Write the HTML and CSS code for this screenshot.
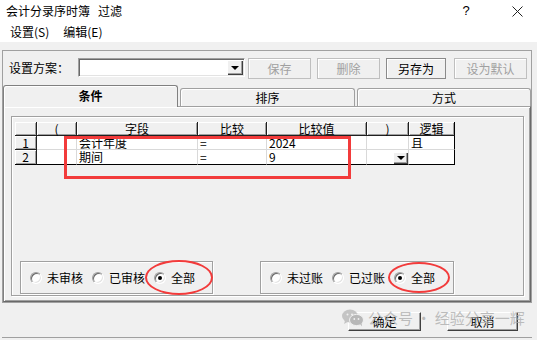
FILE: index.html
```html
<!DOCTYPE html>
<html lang="zh-CN">
<head>
    <meta charset="UTF-8">
    <meta name="viewport" content="width=device-width, initial-scale=1.0">
    <title>会计分录序时簿 过滤</title>
    <link rel="stylesheet" href="styles.css">
</head>
<body>
<div class="dialog">
    <div class="titlebar">
        <span class="title">会计分录序时簿<span class="sub">过滤</span></span>
        <span class="help">?</span>
        <svg class="close" width="11" height="11" viewBox="0 0 11 11">
            <path d="M0.5 0.5L10.5 10.5M10.5 0.5L0.5 10.5" stroke="#222" stroke-width="1" fill="none"/>
        </svg>
    </div>
    <div class="menubar">
        <span>设置(S)</span>
        <span>编辑(E)</span>
    </div>

    <div class="client">
        <div class="frame">
            <div class="scheme">
                <span class="scheme-label">设置方案：</span>
                <div class="combo"><span class="combo-btn"><i class="arrow"></i></span></div>
                <button class="btn btn-save" disabled>保存</button>
                <button class="btn btn-del" disabled>删除</button>
                <button class="btn btn-saveas">另存为</button>
                <button class="btn btn-default" disabled>设为默认</button>
            </div>

            <div class="tabs">
                <div class="tab active">条件</div>
                <div class="tab">排序</div>
                <div class="tab last">方式</div>
            </div>

            <div class="tab-panel">
                <div class="content">
                    <div class="grid">
                        <div class="cell fix"></div>
                        <div class="cell fix">(</div>
                        <div class="cell fix">字段</div>
                        <div class="cell fix">比较</div>
                        <div class="cell fix">比较值</div>
                        <div class="cell fix">)</div>
                        <div class="cell fix end">逻辑</div>

                        <div class="cell fix">1</div>
                        <div class="cell"></div>
                        <div class="cell">会计年度</div>
                        <div class="cell">=</div>
                        <div class="cell">2024</div>
                        <div class="cell"></div>
                        <div class="cell end">且</div>

                        <div class="cell fix foot">2</div>
                        <div class="cell foot"></div>
                        <div class="cell foot">期间</div>
                        <div class="cell foot">=</div>
                        <div class="cell foot">9</div>
                        <div class="cell foot drop-cell"><span class="drop"><i class="arrow"></i></span></div>
                        <div class="cell foot end"></div>
                    </div>

                    <div class="radios">
                        <div class="group group-audit">
                            <span class="radio"><span class="dot"></span>未审核</span>
                            <span class="radio"><span class="dot"></span>已审核</span>
                            <span class="radio"><span class="dot on"></span>全部</span>
                        </div>
                        <div class="group group-post">
                            <span class="radio"><span class="dot"></span>未过账</span>
                            <span class="radio"><span class="dot"></span>已过账</span>
                            <span class="radio"><span class="dot on"></span>全部</span>
                        </div>
                    </div>
                </div>
            </div>
        </div>

        <div class="footer">
            <button class="btn-main btn-ok">确定</button>
            <button class="btn-main btn-cancel">取消</button>
        </div>
    </div>

    <!-- red marks drawn over the screenshot -->
    <div class="mark mark-rows"></div>
    <div class="mark mark-oval mark-audit"></div>
    <div class="mark mark-oval mark-post"></div>

    <div class="watermark">
        <svg width="22" height="18" viewBox="0 0 22 18">
            <ellipse cx="8" cy="7" rx="8" ry="6.5" fill="#c4c4c4"/>
            <path d="M3 11.5L2 15L6 12.8Z" fill="#c4c4c4"/>
            <ellipse cx="14.5" cy="11" rx="7" ry="5.6" fill="#b8b8b8" stroke="#f0f0f0" stroke-width="1"/>
            <path d="M18 15L20 17.5L19.5 14Z" fill="#b8b8b8"/>
            <circle cx="5.5" cy="5.5" r="1" fill="#f0f0f0"/>
            <circle cx="10" cy="5.5" r="1" fill="#f0f0f0"/>
            <circle cx="12.3" cy="10" r="0.9" fill="#f0f0f0"/>
            <circle cx="16.5" cy="10" r="0.9" fill="#f0f0f0"/>
        </svg>
        <span>公众号 · 经验分享一辉</span>
    </div>
</div>
</body>
</html>
```

FILE: styles.css
```css
* {
    box-sizing: border-box;
}

body {
    margin: 0;
    background-color: #f0f0f0;
    font-family: "Noto Sans CJK SC", "Liberation Sans", sans-serif;
    font-size: 12px;
    color: #000;
}

.dialog {
    width: 537px;
    height: 340px;
    position: relative;
    overflow: hidden;
    background-color: #f0f0f0;
}

/* title + menu */
.titlebar {
    height: 22px;
    background-color: #fff;
    display: flex;
    align-items: center;
    padding-left: 6px;
    line-height: 14px;
}

.title {
    flex: 1;
}

.title .sub {
    margin-left: 8px;
}

.help {
    width: 10px;
    text-align: center;
    margin-right: 41px;
    font-family: "Liberation Sans", sans-serif;
    font-size: 13px;
}

.close {
    margin-right: 14px;
}

.menubar {
    height: 20px;
    background-color: #fff;
    display: flex;
    align-items: center;
    gap: 14px;
    padding-left: 10px;
    line-height: 14px;
}

.client {
    height: 298px;
    padding: 8px 5px 0 2px;
}

.frame {
    height: 253px;
    border: 1px solid #a0a0a0;
    display: flex;
    flex-direction: column;
}

/* scheme toolbar */
.scheme {
    height: 34px;
    display: flex;
    align-items: center;
    padding-left: 6px;
}

.scheme-label {
    width: 69px;
    line-height: 14px;
}

.combo {
    width: 167px;
    height: 19px;
    margin-right: 3px;
    margin-top: -1px;
    background-color: #fff;
    border: 1px solid;
    border-color: #a0a0a0 #fff #fff #a0a0a0;
    box-shadow: inset 1px 1px #696969, inset -1px -1px #e3e3e3;
    display: flex;
    justify-content: flex-end;
    padding: 1px;
}

.combo-btn {
    width: 16px;
    height: 15px;
    background-color: #f0f0f0;
    box-shadow: inset 1px 1px #fff, inset -1px -1px #404040, inset -2px -2px #a0a0a0;
    display: flex;
    align-items: center;
    justify-content: center;
}

.arrow {
    display: block;
    width: 0;
    height: 0;
    border-top: 4px solid #000;
    border-left: 4px solid transparent;
    border-right: 4px solid transparent;
}

.btn {
    height: 21px;
    padding: 0;
    font-family: inherit;
    font-size: 12px;
    color: #000;
    background-color: #f0f0f0;
    border: 1px solid #adadad;
    box-shadow: inset 1px 1px #fff;
}

.btn:disabled {
    color: #a0a0a0;
    border-color: #bfbfbf;
}

.btn-save { width: 63px; }
.btn-del { width: 63px; margin-left: 6px; }
.btn-saveas { width: 60px; margin-left: 6px; border-color: #8a8a8a; }
.btn-default { width: 73px; margin-left: 8px; }

/* tabs */
.tabs {
    height: 21px;
    display: flex;
    align-items: flex-end;
    gap: 2px;
}

.tab {
    width: 175px;
    height: 18px;
    border: 1px solid #a0a0a0;
    border-bottom: none;
    border-radius: 3px 3px 0 0;
    box-shadow: inset 1px 1px #fff;
    text-align: center;
    line-height: 17px;
    background-color: #f0f0f0;
}

.tab.last {
    width: 174px;
}

.tab.active {
    height: 22px;
    margin-bottom: -1px;
    line-height: 20px;
    font-weight: bold;
    position: relative;
    z-index: 1;
    border-color: #808080;
}

.tab-panel {
    height: 196px;
    border: 1px solid;
    border-color: #a0a0a0 #696969 #696969 #808080;
    box-shadow: inset 1px 1px #fff, inset -1px -1px #a0a0a0;
    padding: 9px 6px 5px 7px;
    display: flex;
}

.content {
    flex: 1;
    border: 1px solid #a0a0a0;
    box-shadow: inset 1px 1px #fff, 1px 1px #fff;
    padding: 5px 0 0 3px;
    display: flex;
    flex-direction: column;
}

/* condition grid */
.grid {
    width: 440px;
    display: grid;
    grid-template-columns: 22px 40px 121px 69px 100px 42px 46px;
    grid-template-rows: 14px 14px 15px;
}

.cell {
    background-color: #fff;
    border-right: 1px solid #d9d9d9;
    border-bottom: 1px solid #d9d9d9;
    padding-left: 2px;
    line-height: 13px;
    white-space: nowrap;
}

.cell.fix {
    background-color: #f0f0f0;
    border-right-color: #202020;
    border-bottom-color: #202020;
    box-shadow: inset 1px 1px #fff, inset -1px -1px #a0a0a0;
    text-align: center;
    padding-left: 0;
}

.cell.end {
    border-right-color: #000;
}

.cell.foot {
    border-bottom-color: #000;
}

.drop-cell {
    display: flex;
    justify-content: flex-end;
    align-items: flex-end;
    padding: 0;
}

.drop {
    width: 15px;
    height: 12px;
    background-color: #f0f0f0;
    box-shadow: inset 1px 1px #fff, inset -1px -1px #404040, inset -2px -2px #a0a0a0;
    display: flex;
    align-items: center;
    justify-content: center;
}

/* radio groups */
.radios {
    margin-top: auto;
    margin-bottom: 1px;
    display: flex;
    gap: 47px;
    padding-left: 5px;
}

.group {
    height: 33px;
    display: flex;
    align-items: center;
    padding-left: 9px;
    border: 1px solid #a0a0a0;
    box-shadow: inset 1px 1px #fff, 1px 1px #fff;
}

.group-audit { width: 193px; }
.group-post { width: 194px; }

.radio {
    display: flex;
    align-items: center;
    margin-right: 9px;
    line-height: 14px;
}

.dot {
    width: 12px;
    height: 12px;
    margin-right: 5px;
    border-radius: 50%;
    border: 1px solid;
    border-color: #a0a0a0 #fff #fff #a0a0a0;
    box-shadow: inset 1px 1px #696969, inset -1px -1px #e3e3e3;
    background-color: #fff;
    position: relative;
}

.dot.on::after {
    content: "";
    position: absolute;
    left: 3px;
    top: 3px;
    width: 4px;
    height: 4px;
    border-radius: 50%;
    background-color: #000;
}

/* footer */
.footer {
    height: 35px;
    display: flex;
    justify-content: flex-end;
    gap: 26px;
    padding: 9px 14px 0 0;
    border-bottom: 1px solid #a0a0a0;
}

.btn-main {
    height: 19px;
    padding: 0;
    font-family: inherit;
    font-size: 12px;
    color: #000;
    background-color: #f0f0f0;
    border: 1px solid;
    border-color: #fff #404040 #404040 #fff;
    box-shadow: inset -1px -1px #a0a0a0;
}

.btn-ok { width: 73px; }
.btn-cancel { width: 71px; }

/* red annotations */
.mark {
    position: absolute;
    border: 3px solid #f23b3b;
}

.mark-rows {
    left: 64px;
    top: 136px;
    width: 287px;
    height: 43px;
}

.mark-oval {
    border-width: 2.5px;
    border-radius: 50%;
}

.mark-audit {
    left: 145px;
    top: 260px;
    width: 68px;
    height: 35px;
}

.mark-post {
    left: 388px;
    top: 262px;
    width: 62px;
    height: 31px;
}

.watermark {
    position: absolute;
    left: 342px;
    top: 307px;
    display: flex;
    align-items: center;
    gap: 4px;
    font-size: 15px;
    color: rgba(170, 170, 170, 0.75);
    white-space: nowrap;
}
```
